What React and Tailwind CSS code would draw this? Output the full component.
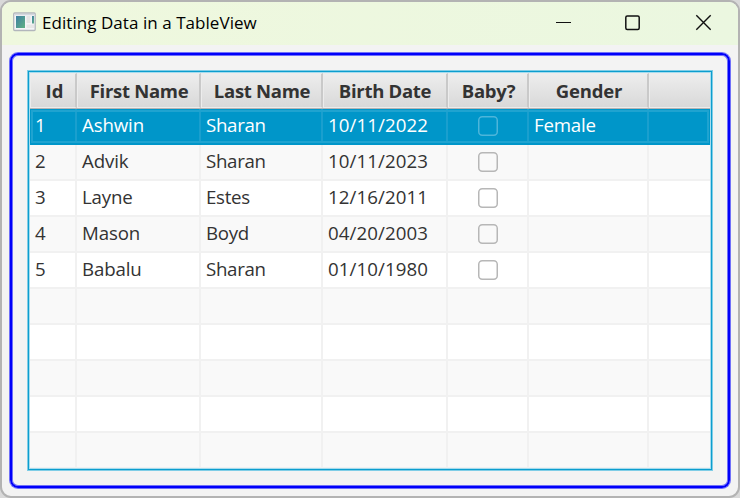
import React from "react";

const GRID = "grid grid-cols-[47px_124px_122px_125px_81px_120px_61px]";

const HEADERS = [
  { label: "Id", cls: "pl-[3px]" },
  { label: "First Name", cls: "pl-[1px] tracking-[-0.3px]" },
  { label: "Last Name", cls: "pl-[1px] tracking-[-0.3px]" },
  { label: "Birth Date", cls: "tracking-[-0.3px]" },
  { label: "Baby?", cls: "pl-[1px] tracking-[-0.2px]" },
  { label: "Gender", cls: "pl-[1px] tracking-[-0.2px]" },
  { label: "", cls: "" },
];

const PEOPLE = [
  { id: "1", first: "Ashwin", last: "Sharan", birth: "10/11/2022", gender: "Female" },
  { id: "2", first: "Advik", last: "Sharan", birth: "10/11/2023", gender: "" },
  { id: "3", first: "Layne", last: "Estes", birth: "12/16/2011", gender: "" },
  { id: "4", first: "Mason", last: "Boyd", birth: "04/20/2003", gender: "" },
  { id: "5", first: "Babalu", last: "Sharan", birth: "01/10/1980", gender: "" },
];

const ROWS = [...PEOPLE, null, null, null, null, null];

function AppIcon() {
  return (
    <svg width="24" height="20" viewBox="0 0 24 20" className="shrink-0">
      <defs>
        <linearGradient id="pane" x1="0" y1="0" x2="1" y2="1">
          <stop offset="0" stopColor="#3d7fa3" />
          <stop offset="1" stopColor="#60b183" />
        </linearGradient>
      </defs>
      <rect x="1.7" y="1" width="21.5" height="17.5" rx="1" fill="#f4f5f7" stroke="#b2b6bc" strokeWidth="1.3" />
      <rect x="2.5" y="1.8" width="20" height="1.5" fill="#d3d7df" />
      <rect x="4" y="4" width="9" height="12" fill="url(#pane)" />
      <rect x="14.5" y="4" width="4" height="7" fill="#e4e4e4" />
      <rect x="20" y="4" width="2" height="7.5" fill="url(#pane)" />
      <rect x="14.5" y="12.5" width="7.5" height="3.5" fill="#e7e7e7" />
    </svg>
  );
}

function TitleBar() {
  return (
    <div className="flex h-[43px] shrink-0 items-start bg-linear-to-r from-[#eff8de] to-[#ebf7e0] pl-[10px]">
      <div className="pt-[10px]">
        <AppIcon />
      </div>
      <span className="mt-[9px] ml-[6px] text-[17px] leading-[24px] tracking-[0.05px] whitespace-nowrap text-black">
        Editing Data in a TableView
      </span>
      <svg width="160" height="20" viewBox="0 0 160 20" className="mr-[24px] ml-auto mt-[10px] shrink-0" fill="none" stroke="#111">
        <path d="M2 10.5H17" strokeWidth="1" />
        <rect x="71.8" y="4" width="13.4" height="13.4" rx="1.5" strokeWidth="1.5" />
        <path d="M142.3 3.3L156.7 17.7M156.7 3.3L142.3 17.7" strokeWidth="1.4" />
      </svg>
    </div>
  );
}

function Cell({ selected, children, center }) {
  return (
    <div
      className={`flex min-w-0 items-center border-r-2 ${selected ? "border-[#1a9fce] text-white" : "border-[#f1f1f1] text-[#333]"} ${
        center ? "justify-center" : "pb-[2px] pl-[5px]"
      }`}
    >
      {children}
    </div>
  );
}

function CheckBox({ selected }) {
  return (
    <svg width="22" height="22" viewBox="0 0 22 22" fill="none" className={selected ? "text-[#4db5da]" : "text-[#b7b7b7]"}>
      <rect x="1.75" y="1.75" width="18.5" height="18.5" rx="3.5" stroke="currentColor" strokeWidth="1.5" />
    </svg>
  );
}

function Row({ person, index }) {
  const selected = index === 0;
  const tone = selected
    ? "bg-[#0096c9] border-[#0096c9]"
    : index % 2
      ? "bg-[#f9f9f9] border-[#f1f1f1]"
      : "bg-white border-[#f1f1f1]";
  return (
    <div className={`relative h-[36px] border-b-2 ${GRID} ${tone}`}>
      <Cell selected={selected}>
        <span>{person?.id}</span>
      </Cell>
      <Cell selected={selected}>
        <span className="tracking-[-0.15px]">{person?.first}</span>
      </Cell>
      <Cell selected={selected}>
        <span className="tracking-[-0.3px]">{person?.last}</span>
      </Cell>
      <Cell selected={selected}>
        <span className="tracking-[0.08px]">{person?.birth}</span>
      </Cell>
      <Cell selected={selected} center>
        {person && <CheckBox selected={selected} />}
      </Cell>
      <Cell selected={selected}>
        <span className="tracking-[-0.2px]">{person?.gender}</span>
      </Cell>
      <div />
      {selected && <div className="absolute top-px right-px bottom-0 left-px border-2 border-[#1fa3d0]" />}
    </div>
  );
}

export default function App() {
  return (
    <div className="h-[498px] w-[740px] overflow-hidden bg-[#d9d9d9] font-['Open_Sans','Noto_Sans',sans-serif]">
      <div className="flex h-full flex-col overflow-hidden rounded-[11px] border-2 border-[#b3b3b3] bg-[#f3f3f3]">
        <TitleBar />
        <div className="mx-[8px] mt-[8px] h-[435px] shrink-0 rounded-[8px] border-2 border-[#0000fa] px-[15px] pt-[15px] shadow-[0_0_0_1px_#7070fa,inset_0_0_0_1px_#7070fa]">
          <div className="h-[401px] border border-[#7fcde6]">
            <div className="h-full border border-[#0c9dce]">
              <div className="h-full overflow-hidden border border-[#a6dcee] bg-white text-[18.7px] leading-[24px]">
                <div className={`h-[36px] border-b border-[#b4b4b4] bg-linear-to-b from-[#eeeeee] to-[#d8d8d8] ${GRID}`}>
                  {HEADERS.map((h, i) => (
                    <div
                      key={i}
                      className={`flex items-center justify-center border-y border-l border-[#ececec] text-[18.5px] font-bold whitespace-nowrap text-[#333] ${
                        i < 6 ? "border-r-2 border-r-[#c9c9c9]" : ""
                      }`}
                    >
                      <span className={h.cls}>{h.label}</span>
                    </div>
                  ))}
                </div>
                {ROWS.map((p, i) => (
                  <Row key={i} person={p} index={i} />
                ))}
              </div>
            </div>
          </div>
        </div>
      </div>
    </div>
  );
}
